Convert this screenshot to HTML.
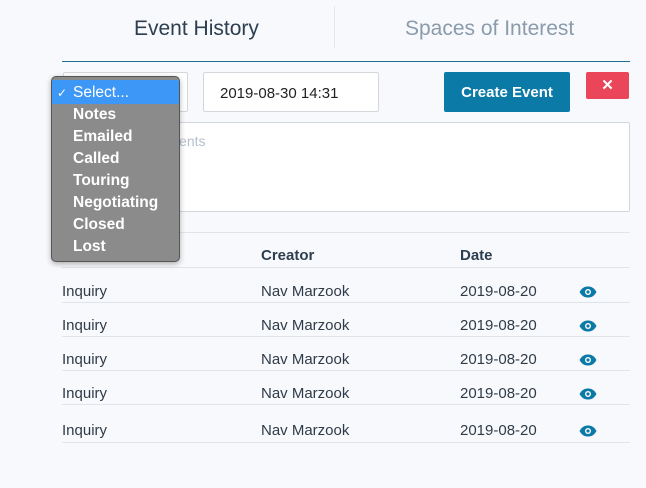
<!DOCTYPE html>
<html><head><style>
body{margin:0;width:646px;height:488px;background:#f8f9fc;font-family:"Liberation Sans",sans-serif;position:relative;overflow:hidden;color:#2b3a4a}
.a{position:absolute}
.tab{font-size:21px;top:17px}
.inp{background:#fff;border:1px solid #d3d7dc;border-radius:2px;box-sizing:border-box}
.row{position:absolute;left:62px;width:568px;height:34px;border-bottom:1px solid #e1e5ea;font-size:15px;color:#2f3b48}
.row span{position:absolute;top:15px}
.dd{left:51px;top:76px;width:129px;height:186px;background:#8b8b8b;border:1px solid #555;border-radius:5px;box-sizing:border-box;box-shadow:0 2px 6px rgba(0,0,0,.3)}
.dd div{height:22px;line-height:22px;padding-left:21px;color:#fff;font-size:15.5px;font-weight:bold}
</style></head><body>
<div class="a tab" style="left:134px;color:#2c3e50">Event History</div>
<div class="a" style="left:334px;top:6px;width:1px;height:42px;background:#e3e6ea"></div>
<div class="a tab" style="left:405px;color:#8a9bab">Spaces of Interest</div>
<div class="a" style="left:62px;top:61px;width:568px;height:1px;background:#1f6f8f"></div>
<div class="a inp" style="left:63px;top:72px;width:125px;height:40px"></div>
<div class="a inp" style="left:203px;top:72px;width:176px;height:40px;font-size:15px;color:#222;padding:12px 0 0 16px">2019-08-30 14:31</div>
<div class="a" style="left:444px;top:72px;width:126px;height:40px;background:#0b7aa6;border-radius:2px;color:#fff;font-size:15px;font-weight:bold;text-align:center;line-height:42px">Create Event</div>
<div class="a" style="left:586px;top:72px;width:43px;height:27px;background:#ea4558;border-radius:2px;color:#fff;font-size:15px;font-weight:bold;text-align:center;line-height:27px">✕</div>
<div class="a inp" style="left:63px;top:122px;width:567px;height:90px;font-size:14px;color:#b5c0cc;padding:10px 0 0 10px">Add event comments</div>
<div class="a" style="left:62px;top:232px;width:568px;height:1px;background:#e1e5ea"></div>
<div class="row" style="top:233px;font-weight:bold;color:#2c3e50"><span style="left:199px;top:14px">Creator</span><span style="left:398px;top:14px">Date</span></div>
<div class="row" style="top:268px"><span style="left:0">Inquiry</span><span style="left:199px">Nav Marzook</span><span style="left:398px">2019-08-20</span><span style="left:517px;top:17px"><svg width="18" height="12" viewBox="0 0 18 12"><path d="M0.5 6C3 1.5 6 0.5 9 0.5S15 1.5 17.5 6C15 10.5 12 11.5 9 11.5S3 10.5 0.5 6Z" fill="#0b7aa6"/><circle cx="9" cy="6" r="3" fill="#fff"/><circle cx="9" cy="6" r="1.6" fill="#0b7aa6"/></svg></span></div>
<div class="row" style="top:302px"><span style="left:0">Inquiry</span><span style="left:199px">Nav Marzook</span><span style="left:398px">2019-08-20</span><span style="left:517px;top:17px"><svg width="18" height="12" viewBox="0 0 18 12"><path d="M0.5 6C3 1.5 6 0.5 9 0.5S15 1.5 17.5 6C15 10.5 12 11.5 9 11.5S3 10.5 0.5 6Z" fill="#0b7aa6"/><circle cx="9" cy="6" r="3" fill="#fff"/><circle cx="9" cy="6" r="1.6" fill="#0b7aa6"/></svg></span></div>
<div class="row" style="top:336px"><span style="left:0">Inquiry</span><span style="left:199px">Nav Marzook</span><span style="left:398px">2019-08-20</span><span style="left:517px;top:17px"><svg width="18" height="12" viewBox="0 0 18 12"><path d="M0.5 6C3 1.5 6 0.5 9 0.5S15 1.5 17.5 6C15 10.5 12 11.5 9 11.5S3 10.5 0.5 6Z" fill="#0b7aa6"/><circle cx="9" cy="6" r="3" fill="#fff"/><circle cx="9" cy="6" r="1.6" fill="#0b7aa6"/></svg></span></div>
<div class="row" style="top:370px"><span style="left:0">Inquiry</span><span style="left:199px">Nav Marzook</span><span style="left:398px">2019-08-20</span><span style="left:517px;top:17px"><svg width="18" height="12" viewBox="0 0 18 12"><path d="M0.5 6C3 1.5 6 0.5 9 0.5S15 1.5 17.5 6C15 10.5 12 11.5 9 11.5S3 10.5 0.5 6Z" fill="#0b7aa6"/><circle cx="9" cy="6" r="3" fill="#fff"/><circle cx="9" cy="6" r="1.6" fill="#0b7aa6"/></svg></span></div>
<div class="row" style="top:408px"><span style="left:0;top:14px">Inquiry</span><span style="left:199px;top:14px">Nav Marzook</span><span style="left:398px;top:14px">2019-08-20</span><span style="left:517px;top:16px"><svg width="18" height="12" viewBox="0 0 18 12"><path d="M0.5 6C3 1.5 6 0.5 9 0.5S15 1.5 17.5 6C15 10.5 12 11.5 9 11.5S3 10.5 0.5 6Z" fill="#0b7aa6"/><circle cx="9" cy="6" r="3" fill="#fff"/><circle cx="9" cy="6" r="1.6" fill="#0b7aa6"/></svg></span></div>
<div class="a dd">
<div style="background:#3d97f6;margin-top:3px;height:24px;line-height:26px;position:relative;font-weight:normal"><span style="position:absolute;left:5px;font-size:12px">✓</span>Select...</div>
<div>Notes</div><div>Emailed</div><div>Called</div><div>Touring</div><div>Negotiating</div><div>Closed</div><div>Lost</div>
</div>
</body></html>
